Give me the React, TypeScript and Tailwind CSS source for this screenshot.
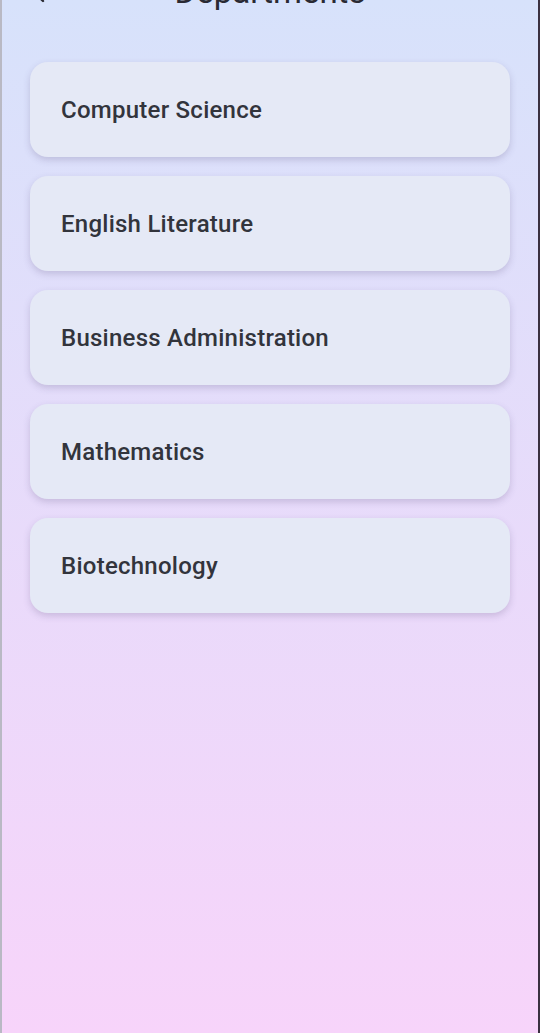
import { ArrowLeft } from 'lucide-react';

const departments = [
  'Computer Science',
  'English Literature',
  'Business Administration',
  'Mathematics',
  'Biotechnology',
];

export default function App() {
  return (
    <div
      className="h-[1033px] w-full overflow-hidden border-l-2 border-r-2 border-l-[#b9b9c4] border-r-[#3a3040] bg-gradient-to-b from-[#d7e2fb] to-[#f7d4fa]"
      style={{ fontFamily: 'Roboto, "Noto Sans", sans-serif' }}
    >
      {/* Header (scrolled partly off screen) */}
      <div className="relative -mt-[29px] flex h-[40px] items-center justify-center">
        <ArrowLeft className="absolute left-[29px] top-[11px] h-6 w-6 text-[#2a2a33]" strokeWidth={2.4} />
        <h1 className="text-[33px] font-normal leading-none text-[#2a2a33]">Departments</h1>
      </div>

      <div className="mt-[51px] flex flex-col gap-[19px] px-[28px]">
        {departments.map((name) => (
          <div
            key={name}
            className="flex h-[95px] items-center rounded-[18px] bg-[#e5e9f6] pl-[31px] shadow-[0_3px_7px_rgba(80,70,120,0.22)]"
          >
            <span className="text-[24px] font-medium tracking-[0.25px] text-[#32343c]">{name}</span>
          </div>
        ))}
      </div>
    </div>
  );
}
